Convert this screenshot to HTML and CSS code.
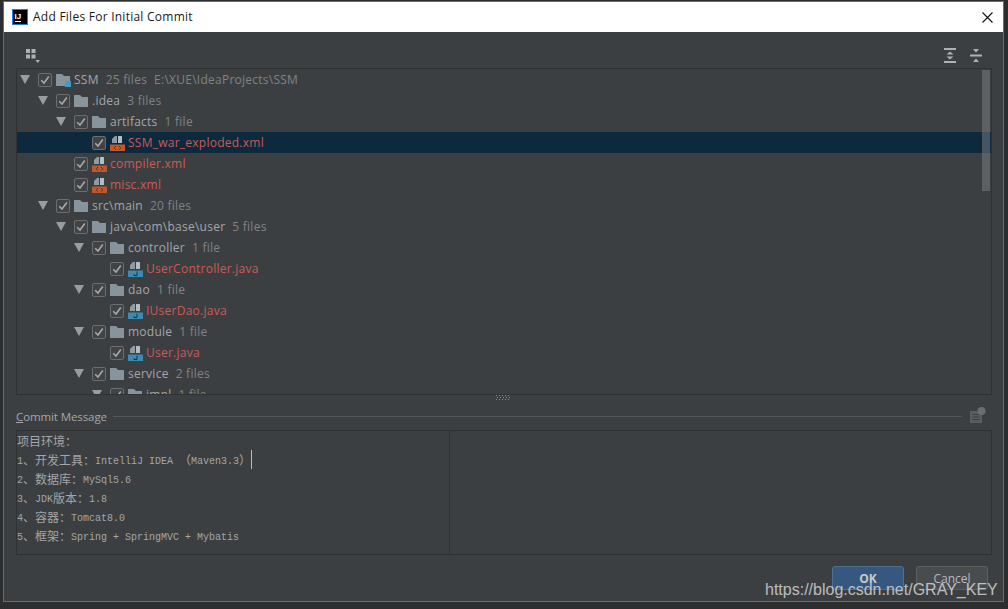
FILE: index.html
```html
<!DOCTYPE html>
<html lang="zh">
<head>
<meta charset="utf-8">
<title>Add Files For Initial Commit</title>
<link rel="stylesheet" href="styles.css">
</head>
<body>
<svg class="defs" width="0" height="0">
  <symbol id="arrow" viewBox="0 0 10 9"><polygon points="0,0 10,0 5,9" fill="#9a9da0"/></symbol>
  <symbol id="check" viewBox="0 0 14 14"><rect x=".5" y=".5" width="13" height="13" rx="1.5" fill="#414446" stroke="#6b6d6f"/><path d="M3.200 7.200 6 10 10.800 3.600" fill="none" stroke="#a8a8a8" stroke-width="1.600"/></symbol>
  <symbol id="folder" viewBox="0 0 14 12"><path d="M0 0h6l2 2h6v10H0z" fill="#87949c"/></symbol>
  <symbol id="xml" viewBox="0 0 15 15"><path d="M5 0h2v7H2V3z" fill="#8f9ba3"/><path d="M8 0h4v7H8z" fill="#b4bdc3"/><rect y="8.500" width="15" height="6.500" fill="#c0582a"/><path d="M6 10 4.200 11.800 6 13.600M9 10l1.800 1.800L9 13.600" fill="none" stroke="#3c3f41"/></symbol>
  <symbol id="java" viewBox="0 0 15 15"><path d="M5 0h2v7H2V3z" fill="#8f9ba3"/><path d="M8 0h4v7H8z" fill="#b4bdc3"/><rect y="8.500" width="15" height="6.500" fill="#3d8bb0"/><path d="M9 9.500v4H6v-1.500" fill="none" stroke="#22343f"/></symbol>
</svg>

<div class="window">
  <header class="titlebar">
    <svg class="app-icon" width="16" height="16" viewBox="0 0 16 16"><rect x=".5" y=".5" width="15" height="15" fill="#000" stroke="#1f7fd0"/><text x="2.500" y="9.500" font-family="Liberation Sans" font-weight="700" font-size="8" fill="#fff">IJ</text><rect x="3" y="12" width="6" height="1" fill="#fff"/></svg>
    <span class="title">Add Files For Initial Commit</span>
    <svg class="close" width="11" height="11" viewBox="0 0 11 11"><path d="M.5.5l10 10M10.500.5l-10 10" stroke="#111" stroke-width="1.100"/></svg>
  </header>

  <div class="toolbar">
    <svg class="group-icon" width="14" height="15" viewBox="0 0 14 15" fill="#afb1b3"><rect width="4" height="4"/><rect x="5.500" width="4" height="4"/><rect y="5.500" width="4" height="4"/><rect x="5.500" y="5.500" width="4" height="4"/><polygon points="9.500,11 14,11 11.750,14"/></svg>
    <div class="toolbar-right">
      <svg width="12" height="15" viewBox="0 0 12 15" fill="#afb1b3"><rect width="12" height="2"/><rect y="13" width="12" height="2"/><polygon points="6,3.500 9.500,6.500 2.500,6.500"/><polygon points="6,11.500 9.500,8.500 2.500,8.500"/></svg>
      <svg width="12" height="13" viewBox="0 0 12 13" fill="#afb1b3"><rect y="5.500" width="12" height="2"/><polygon points="3,0 9,0 6,3.500"/><polygon points="3,13 9,13 6,9.500"/></svg>
    </div>
  </div>

  <div class="tree">
    <div class="scrollbar"></div>
    <div class="row d0"><svg class="arrow"><use href="#arrow"/></svg><svg class="cb"><use href="#check"/></svg><span class="icon-wrap"><svg class="folder"><use href="#folder"/></svg><i class="module-mark"></i></span><span class="name">SSM</span><span class="count">25 files</span><span class="count path">E:\XUE\IdeaProjects\SSM</span></div>
    <div class="row d1"><svg class="arrow"><use href="#arrow"/></svg><svg class="cb"><use href="#check"/></svg><span class="icon-wrap"><svg class="folder"><use href="#folder"/></svg></span><span class="name">.idea</span><span class="count">3 files</span></div>
    <div class="row d2"><svg class="arrow"><use href="#arrow"/></svg><svg class="cb"><use href="#check"/></svg><span class="icon-wrap"><svg class="folder"><use href="#folder"/></svg></span><span class="name">artifacts</span><span class="count">1 file</span></div>
    <div class="row d3 selected"><span class="arrow"></span><svg class="cb"><use href="#check"/></svg><span class="icon-wrap"><svg class="file"><use href="#xml"/></svg></span><span class="new">SSM_war_exploded.xml</span></div>
    <div class="row d2"><span class="arrow"></span><svg class="cb"><use href="#check"/></svg><span class="icon-wrap"><svg class="file"><use href="#xml"/></svg></span><span class="new">compiler.xml</span></div>
    <div class="row d2"><span class="arrow"></span><svg class="cb"><use href="#check"/></svg><span class="icon-wrap"><svg class="file"><use href="#xml"/></svg></span><span class="new">misc.xml</span></div>
    <div class="row d1"><svg class="arrow"><use href="#arrow"/></svg><svg class="cb"><use href="#check"/></svg><span class="icon-wrap"><svg class="folder"><use href="#folder"/></svg></span><span class="name">src\main</span><span class="count">20 files</span></div>
    <div class="row d2"><svg class="arrow"><use href="#arrow"/></svg><svg class="cb"><use href="#check"/></svg><span class="icon-wrap"><svg class="folder"><use href="#folder"/></svg></span><span class="name">java\com\base\user</span><span class="count">5 files</span></div>
    <div class="row d3"><svg class="arrow"><use href="#arrow"/></svg><svg class="cb"><use href="#check"/></svg><span class="icon-wrap"><svg class="folder"><use href="#folder"/></svg></span><span class="name">controller</span><span class="count">1 file</span></div>
    <div class="row d4"><span class="arrow"></span><svg class="cb"><use href="#check"/></svg><span class="icon-wrap"><svg class="file"><use href="#java"/></svg></span><span class="new">UserController.java</span></div>
    <div class="row d3"><svg class="arrow"><use href="#arrow"/></svg><svg class="cb"><use href="#check"/></svg><span class="icon-wrap"><svg class="folder"><use href="#folder"/></svg></span><span class="name">dao</span><span class="count">1 file</span></div>
    <div class="row d4"><span class="arrow"></span><svg class="cb"><use href="#check"/></svg><span class="icon-wrap"><svg class="file"><use href="#java"/></svg></span><span class="new">IUserDao.java</span></div>
    <div class="row d3"><svg class="arrow"><use href="#arrow"/></svg><svg class="cb"><use href="#check"/></svg><span class="icon-wrap"><svg class="folder"><use href="#folder"/></svg></span><span class="name">module</span><span class="count">1 file</span></div>
    <div class="row d4"><span class="arrow"></span><svg class="cb"><use href="#check"/></svg><span class="icon-wrap"><svg class="file"><use href="#java"/></svg></span><span class="new">User.java</span></div>
    <div class="row d3"><svg class="arrow"><use href="#arrow"/></svg><svg class="cb"><use href="#check"/></svg><span class="icon-wrap"><svg class="folder"><use href="#folder"/></svg></span><span class="name">service</span><span class="count">2 files</span></div>
    <div class="row d4"><svg class="arrow"><use href="#arrow"/></svg><svg class="cb"><use href="#check"/></svg><span class="icon-wrap"><svg class="folder"><use href="#folder"/></svg></span><span class="name">impl</span><span class="count">1 file</span></div>
  </div>

  <div class="splitter"><svg width="14" height="5" viewBox="0 0 14 5" fill="#8a8d8f"><path d="M0 0h1v1H0zM3 0h1v1H3zM6 0h1v1H6zM9 0h1v1H9zM12 0h1v1h-1zM1 2h1v1H1zM4 2h1v1H4zM7 2h1v1H7zM10 2h1v1h-1zM13 2h1v1h-1zM0 4h1v1H0zM3 4h1v1H3zM6 4h1v1H6zM9 4h1v1H9zM12 4h1v1h-1z"/></svg></div>

  <div class="msg-head">
    <span class="msg-label"><u>C</u>ommit Message</span>
    <span class="msg-rule"></span>
    <svg class="msg-icon" width="16" height="16" viewBox="0 0 16 16"><rect y="4" width="12" height="12" fill="#5a5d5f"/><path d="M2.500 7.500h7M2.500 10h7M2.500 12.500h7" stroke="#3c3f41"/><circle cx="11.500" cy="4" r="4" fill="#6b6e70"/></svg>
  </div>

  <div class="editor">
    <div class="editor-left">
      <div>项目环境：</div>
      <div><span class="lat">1</span>、开发工具：<span class="lat">IntelliJ IDEA </span>（<span class="lat">Maven3.3</span>）<span class="caret"></span></div>
      <div><span class="lat">2</span>、数据库：<span class="lat">MySql5.6</span></div>
      <div><span class="lat">3</span>、<span class="lat">JDK</span>版本：<span class="lat">1.8</span></div>
      <div><span class="lat">4</span>、容器：<span class="lat">Tomcat8.0</span></div>
      <div><span class="lat">5</span>、框架：<span class="lat">Spring + SpringMVC + Mybatis</span></div>
    </div>
  </div>

  <footer class="footer">
    <button class="btn primary">OK</button>
    <button class="btn">Cancel</button>
  </footer>
</div>

<div class="watermark">https://blog.csdn.net/GRAY_KEY</div>
</body>
</html>
```
FILE: styles.css
```css
* { box-sizing: border-box; }
html, body { margin: 0; height: 100%; }
body {
  position: relative;
  width: 1008px;
  height: 609px;
  overflow: hidden;
  background: #2b2d2e;
  font-family: "Open Sans", "Noto Sans", sans-serif;
  padding: 1px 4px 7px 3px;
}
.defs { position: absolute; }

.window {
  height: 601px;
  border: 1px solid #2b7cc4;
  background: #3c3f41;
  display: flex;
  flex-direction: column;
}

.titlebar {
  height: 30px;
  flex: none;
  background: #fff;
  display: flex;
  align-items: center;
  padding: 0 10px 0 8px;
}
.app-icon { margin-right: 5px; }
.title { font-size: 12px; color: #1a1a1a; letter-spacing: .25px; margin-top: -2px; }
.close { margin-left: auto; }

.toolbar {
  height: 36px;
  flex: none;
  display: flex;
  align-items: center;
  justify-content: space-between;
  padding: 10px 21px 0 22px;
}
.group-icon { margin-top: 2px; }
.toolbar-right { display: flex; align-items: center; gap: 14px; }

.tree {
  position: relative;
  height: 327px;
  flex: none;
  margin: 0 11px 0 12px;
  border: 1px solid #2f3133;
  overflow: hidden;
  font-size: 12px;
  letter-spacing: .25px;
}
.scrollbar {
  position: absolute;
  top: 1px;
  right: 1px;
  width: 8px;
  height: 121px;
  background: rgba(120, 122, 124, .55);
  z-index: 1;
}
.row {
  height: 21px;
  display: flex;
  align-items: center;
  white-space: nowrap;
}
.d0 { padding-left: 0; }
.d1 { padding-left: 18px; }
.d2 { padding-left: 36px; }
.d3 { padding-left: 54px; }
.d4 { padding-left: 72px; }
.selected { background: #0d293e; }

.arrow { width: 10px; height: 9px; margin: 0 8px 0 3px; flex: none; display: block; }
.cb { width: 14px; height: 14px; margin-right: 4px; flex: none; }
.icon-wrap { position: relative; width: 16px; height: 17px; margin-right: 2px; flex: none; display: flex; align-items: center; }
.folder { width: 14px; height: 12px; }
.file { width: 15px; height: 15px; margin-top: 2px; }
.module-mark { position: absolute; right: 1px; bottom: 1px; width: 6px; height: 6px; background: #3d9dc9; }
.name { color: #a3a6a8; }
.count { color: #7f8386; margin-left: 7px; }
.new { color: #cc5a55; }

.splitter {
  height: 8px;
  flex: none;
  display: flex;
  justify-content: center;
  align-items: flex-start;
  padding-right: 2px;
}

.msg-head {
  height: 27px;
  flex: none;
  display: flex;
  align-items: center;
  margin: 0 17px 0 12px;
}
.msg-label { font-size: 11.500px; color: #a3a6a8; letter-spacing: -.1px; }
.msg-rule { flex: 1; height: 1px; background: #55585a; margin: 0 8px 0 6px; }
.msg-icon { margin-top: -4px; }

.editor {
  height: 125px;
  flex: none;
  margin: 0 11px 0 12px;
  border: 1px solid #2f3133;
}
.editor-left {
  width: 433px;
  height: 100%;
  border-right: 1px solid #2f3133;
  font-family: "Noto Sans CJK SC", "Liberation Mono", monospace;
  font-size: 12px;
  line-height: 19px;
  color: #a3a6a8;
}
.editor-left > div { height: 19px; white-space: pre; }
.lat { font-family: "Liberation Mono", monospace; font-size: 10px; line-height: 0; vertical-align: 1px; }
.caret { display: inline-block; width: 1px; height: 19px; background: #bbb; vertical-align: top; }

.footer {
  flex: 1;
  display: flex;
  justify-content: flex-end;
  gap: 12px;
  padding: 11px 15px 0 0;
}
.btn {
  width: 72px;
  height: 24px;
  padding: 0;
  border: 1px solid #5e6060;
  border-radius: 3px;
  background: #494c4e;
  color: #b8babc;
  font: 12px "Open Sans", sans-serif;
}
.btn.primary {
  background: #365880;
  border-color: #4c708c;
  color: #c8cacc;
  font-weight: 700;
}

.watermark {
  position: absolute;
  left: 765px;
  top: 580px;
  font: 16px/20px "Liberation Sans", sans-serif;
  color: rgba(225, 225, 225, .78);
  white-space: nowrap;
}
```
